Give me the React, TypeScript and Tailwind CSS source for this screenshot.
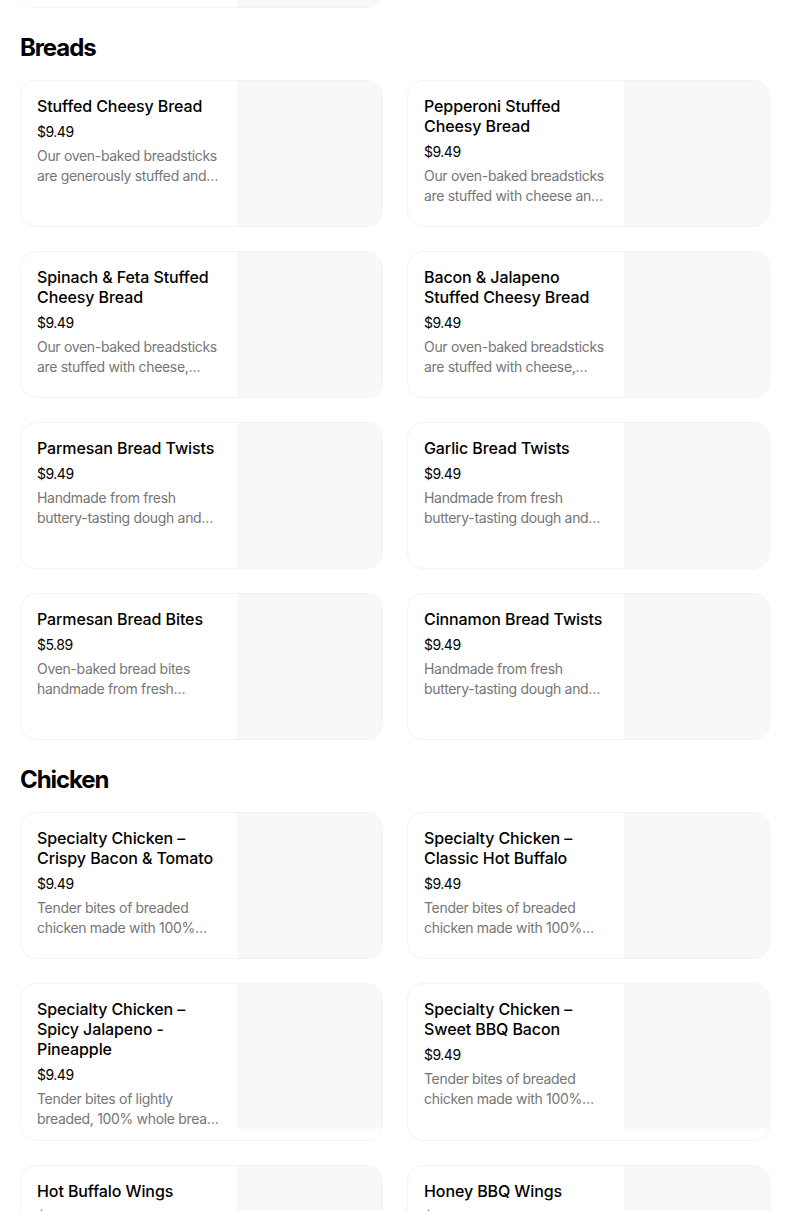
import React from "react";

type Item = { name: string; price: string; desc: string };

const breads: Item[] = [
  { name: "Stuffed Cheesy Bread", price: "$9.49", desc: "Our oven-baked breadsticks are generously stuffed and covered with a blend of 100% real mozzarella and cheddar cheeses then seasoned with a touch of garlic." },
  { name: "Pepperoni Stuffed Cheesy Bread", price: "$9.49", desc: "Our oven-baked breadsticks are stuffed with cheese and pepperoni, covered in a blend of cheeses made with 100% real mozzarella." },
  { name: "Spinach & Feta Stuffed Cheesy Bread", price: "$9.49", desc: "Our oven-baked breadsticks are stuffed with cheese, fresh spinach and feta, covered in a blend of cheeses." },
  { name: "Bacon & Jalapeno Stuffed Cheesy Bread", price: "$9.49", desc: "Our oven-baked breadsticks are stuffed with cheese, smoked bacon & jalapeno peppers." },
  { name: "Parmesan Bread Twists", price: "$9.49", desc: "Handmade from fresh buttery-tasting dough and baked to a golden brown. Crusty on the outside and soft on the inside." },
  { name: "Garlic Bread Twists", price: "$9.49", desc: "Handmade from fresh buttery-tasting dough and baked to a golden brown. Crusty on the outside and soft on the inside." },
  { name: "Parmesan Bread Bites", price: "$5.89", desc: "Oven-baked bread bites handmade from fresh buttery-tasting dough and seasoned with garlic and parmesan." },
  { name: "Cinnamon Bread Twists", price: "$9.49", desc: "Handmade from fresh buttery-tasting dough and baked to a golden brown. Crusty on the outside and soft on the inside." },
];

const chicken: Item[] = [
  { name: "Specialty Chicken – Crispy Bacon & Tomato", price: "$9.49", desc: "Tender bites of breaded chicken made with 100% whole breast white meat topped with garlic parmesan sauce." },
  { name: "Specialty Chicken – Classic Hot Buffalo", price: "$9.49", desc: "Tender bites of breaded chicken made with 100% whole breast white meat topped with classic hot buffalo sauce." },
  { name: "Specialty Chicken – Spicy Jalapeno - Pineapple", price: "$9.49", desc: "Tender bites of lightly breaded, 100% whole breast white meat chicken topped with sweet mango habanero sauce." },
  { name: "Specialty Chicken – Sweet BBQ Bacon", price: "$9.49", desc: "Tender bites of breaded chicken made with 100% whole breast white meat topped with sweet and smoky honey BBQ sauce." },
  { name: "Hot Buffalo Wings", price: "$9.49", desc: "Marinated and oven-baked and then smothered in Hot Buffalo Sauce." },
  { name: "Honey BBQ Wings", price: "$9.49", desc: "Marinated and oven-baked and then smothered in sweet and smoky Honey BBQ Sauce." },
];

function Card({ item }: { item: Item }) {
  return (
    <div className="flex items-start overflow-hidden rounded-2xl border border-[#f3f3f3] bg-white">
      <div className="flex min-w-0 flex-1 flex-col pt-[15px] pb-[11px] pl-4 pr-4">
        <div className="text-[16px] font-medium leading-5 tracking-[-0.1px] text-black">{item.name}</div>
        <div className="mt-[6px] text-[14px] leading-5 tracking-[-0.5px] text-black">{item.price}</div>
        <div className="mt-1 line-clamp-2 text-[14px] leading-5 tracking-[-0.32px] text-[#767676]">{item.desc}</div>
      </div>
      <div className="h-[145px] w-[145px] shrink-0 bg-[#f8f8f8]" />
    </div>
  );
}

function Section({ title, items }: { title: string; items: Item[] }) {
  return (
    <section className="pt-6">
      <h2 className="mb-4 text-[24px] font-bold leading-8 tracking-[-1.1px] text-black">{title}</h2>
      <div className="grid grid-cols-2 gap-6">
        {items.map((it) => (
          <Card key={it.name} item={it} />
        ))}
      </div>
    </section>
  );
}

export default function App() {
  return (
    <div className="h-[1211px] overflow-hidden bg-white" style={{ fontFamily: "Inter, 'Noto Sans', sans-serif" }}>
      <div className="ml-5 w-[750px]">
        <div className="flex h-[8px] flex-col justify-end overflow-hidden">
          <div className="grid shrink-0 grid-cols-2 gap-6">
            <Card item={{ name: "Cheesy Bread", price: "$9.49", desc: "Oven-baked breadsticks." }} />
          </div>
        </div>
        <Section title="Breads" items={breads} />
        <Section title="Chicken" items={chicken} />
      </div>
    </div>
  );
}
